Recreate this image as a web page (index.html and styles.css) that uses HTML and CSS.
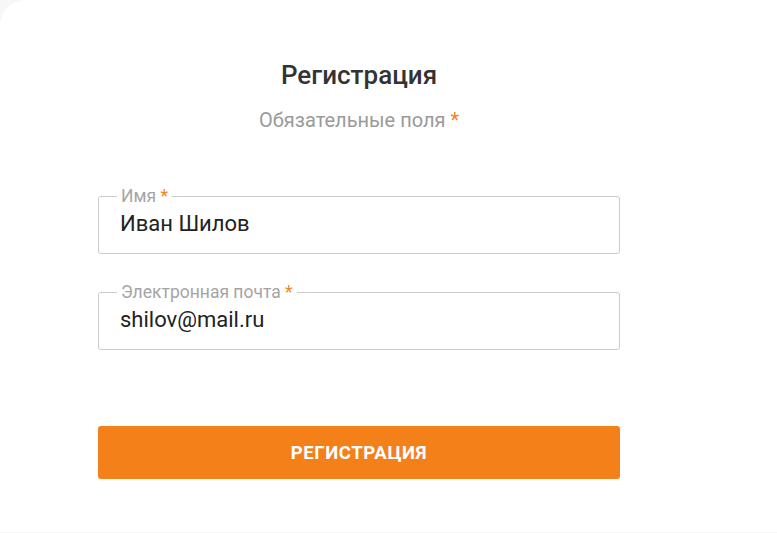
FILE: index.html
```html
<!DOCTYPE html>
<html lang="ru">
<head>
<meta charset="utf-8">
<link rel="stylesheet" href="styles.css">
</head>
<body>
<div class="card">
  <form class="form">
    <h1 class="title">Регистрация</h1>
    <p class="subtitle">Обязательные поля <span class="req">*</span></p>
    <fieldset class="field field-first">
      <legend class="legend">Имя <span class="req">*</span></legend>
      <div class="value">Иван Шилов</div>
    </fieldset>
    <fieldset class="field">
      <legend class="legend">Электронная почта <span class="req">*</span></legend>
      <div class="value">shilov@mail.ru</div>
    </fieldset>
    <button type="button" class="btn">Регистрация</button>
  </form>
</div>
</body>
</html>
```
FILE: styles.css
```css
* { box-sizing: border-box; }
html, body { margin: 0; padding: 0; }
body {
  background: #f7f7f7;
  font-family: Roboto, "Noto Sans", Arial, sans-serif;
  width: 777px;
  height: 533px;
  overflow: hidden;
}
.card {
  background: #fff;
  width: 777px;
  height: 532px;
  border-top-left-radius: 26px;
  padding-top: 58px;
}
.form {
  width: 522px;
  margin-left: 98px;
  display: flex;
  flex-direction: column;
}
.title {
  margin: 0;
  text-align: center;
  font-size: 26px;
  font-weight: 500;
  color: #333;
  line-height: 34px;
}
.subtitle {
  margin: 16px 0 0;
  text-align: center;
  font-size: 20px;
  color: #9a9a9a;
  line-height: 24px;
}
.req { color: #f5821f; }
.field {
  margin: 0;
  border: 1px solid #cbcbcb;
  border-radius: 3px;
  padding: 0 21px 0 21px;
  height: 68px;
}
.field-first { margin-top: 54px; }
.field + .field { margin-top: 28px; }
.legend {
  padding: 0 4px;
  margin-left: -3px;
  font-size: 17.5px;
  color: #a5a5a5;
  line-height: 20px;
}
.value {
  font-size: 22px;
  color: #222;
  line-height: 26px;
  padding-top: 5px;
}
.btn {
  margin-top: 76px;
  height: 53px;
  border: none;
  border-radius: 3px;
  background: #f48019;
  color: #fff;
  font-family: Roboto, Arial, sans-serif;
  font-size: 18.5px;
  font-weight: 700;
  text-transform: uppercase;
  letter-spacing: 0.6px;
}
```
